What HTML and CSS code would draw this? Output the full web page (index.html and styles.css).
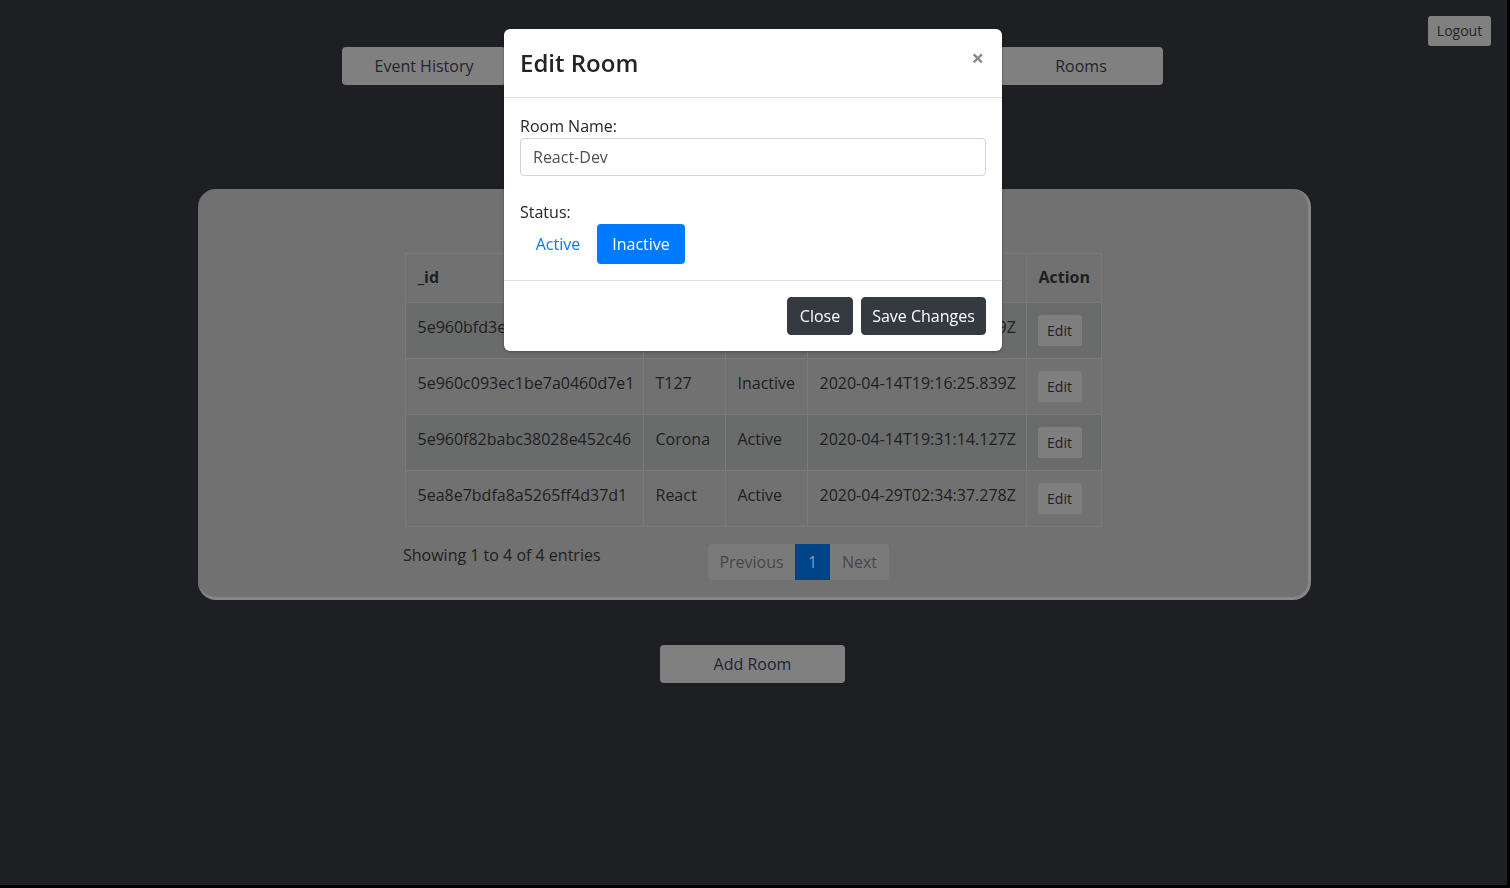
FILE: index.html
```html
<!DOCTYPE html>
<html lang="en">
<head>
<meta charset="utf-8">
<title>Rooms</title>
<link rel="stylesheet" href="styles.css">
</head>
<body>
<div class="page">
  <header class="topbar">
    <button class="btn-gray logout">Logout</button>
  </header>
  <nav class="nav">
    <button class="btn-gray nav-btn">Event History</button>
    <button class="btn-gray nav-btn">Users</button>
    <button class="btn-gray nav-btn">Devices</button>
    <button class="btn-gray nav-btn">Rooms</button>
  </nav>
  <main class="card">
    <table class="dt">
      <colgroup>
        <col class="c-id"><col class="c-name"><col class="c-status"><col class="c-date"><col class="c-action">
      </colgroup>
      <thead>
        <tr><th>_id</th><th>Name</th><th>Status</th><th>Created</th><th>Action</th></tr>
      </thead>
      <tbody>
        <tr class="odd"><td>5e960bfd3ec1be7a0460d7e0</td><td>Dev</td><td>Inactive</td><td>2020-04-14T19:15:09.519Z</td><td class="act"><button class="edit">Edit</button></td></tr>
        <tr><td>5e960c093ec1be7a0460d7e1</td><td>T127</td><td>Inactive</td><td>2020-04-14T19:16:25.839Z</td><td class="act"><button class="edit">Edit</button></td></tr>
        <tr class="odd"><td>5e960f82babc38028e452c46</td><td>Corona</td><td>Active</td><td>2020-04-14T19:31:14.127Z</td><td class="act"><button class="edit">Edit</button></td></tr>
        <tr><td>5ea8e7bdfa8a5265ff4d37d1</td><td>React</td><td>Active</td><td>2020-04-29T02:34:37.278Z</td><td class="act"><button class="edit">Edit</button></td></tr>
      </tbody>
    </table>
    <div class="dt-foot">
      <div class="info">Showing 1 to 4 of 4 entries</div>
      <ul class="pager">
        <li class="pg first">Previous</li>
        <li class="pg current">1</li>
        <li class="pg last">Next</li>
      </ul>
    </div>
  </main>
  <div class="add-wrap">
    <button class="btn-gray add-btn">Add Room</button>
  </div>
</div>

<div class="modal-layer">
  <div class="modal">
    <div class="modal-header">
      <h4 class="modal-title">Edit Room</h4>
      <span class="close">×</span>
    </div>
    <div class="modal-body">
      <div class="form-group">
        <label class="lbl">Room Name:</label>
        <div class="input">React-Dev</div>
      </div>
      <div class="form-group last">
        <label class="lbl">Status:</label>
        <div class="toggle">
          <button class="tg tg-link">Active</button>
          <button class="tg tg-primary">Inactive</button>
        </div>
      </div>
    </div>
    <div class="modal-footer">
      <button class="btn-dark btn-close">Close</button>
      <button class="btn-dark btn-save">Save Changes</button>
    </div>
  </div>
</div>
</body>
</html>
```

FILE: styles.css
```css
* { box-sizing: border-box; }

html, body {
  margin: 0;
  padding: 0;
}

body {
  background: #000;
  font-family: "Open Sans", "Noto Sans", sans-serif;
  font-size: 16px;
  line-height: 24px;
  color: #212529;
}

.page {
  width: 1507px;
  height: 885px;
  background: #1e1f23;
  overflow: hidden;
}

button {
  font-family: inherit;
}

.btn-gray {
  background: #808080;
  color: #1e2530;
  border: none;
  border-radius: 4px;
  font-size: 16px;
  line-height: 24px;
  padding: 7px 12px;
}

.topbar {
  display: flex;
  justify-content: flex-end;
  padding: 16px 16px 0 0;
}

.logout {
  font-size: 14px;
  line-height: 21px;
  padding: 3px 8px 5px;
  width: 63px;
  height: 30px;
  border-radius: 3px;
}

.nav {
  display: flex;
  justify-content: center;
  gap: 55px;
  margin-top: 1px;
  padding-right: 2px;
}

.nav-btn {
  width: 164px;
  height: 38px;
}

.card {
  width: 1113px;
  margin: 104px 0 0 198px;
  background: #717171;
  border-right: 3px solid #868686;
  border-bottom: 3px solid #868686;
  border-radius: 18px;
  padding: 64px 0 17px;
}

.dt {
  width: 696px;
  margin: 0 auto;
  table-layout: fixed;
  border-collapse: collapse;
  color: #1d1f22;
}

.c-id { width: 238px; }
.c-name { width: 82px; }
.c-status { width: 82px; }
.c-date { width: 219px; }
.c-action { width: 75px; }

.dt th, .dt td {
  border: 1px solid #7a7a7a;
  text-align: left;
  white-space: nowrap;
  overflow: hidden;
  vertical-align: middle;
}

.dt th {
  font-weight: 700;
  padding: 11px 12px 13px;
}

.dt td {
  height: 56px;
  padding: 8px 12px 16px;
}

.dt td.act {
  padding: 12px 12px 12px 11px;
}

.dt tr.odd td {
  background: #6a6b6b;
}

.edit {
  background: #7e7e7e;
  color: #1d1f22;
  border: 1px solid #7e7e7e;
  border-radius: 3px;
  font-size: 14px;
  line-height: 21px;
  padding: 4px 0;
  width: 44px;
  height: 31px;
}

.dt-foot {
  width: 700px;
  margin: 16px auto 0;
  display: grid;
  grid-template-columns: 305px auto;
  align-items: start;
}

.info {
  color: #1d1f22;
  line-height: 24px;
}

.pager {
  list-style: none;
  margin: 1px 0 0;
  padding: 0;
  display: flex;
}

.pg {
  background: #7a7a7a;
  color: #43474c;
  height: 36px;
  line-height: 24px;
  padding: 6px 0;
  text-align: center;
}

.pg.first { border-radius: 4px 0 0 4px; width: 87px; }
.pg.current { background: #004387; color: #7f9dbf; width: 35px; }
.pg.last { border-radius: 0 4px 4px 0; width: 59px; }

.add-wrap {
  display: flex;
  justify-content: center;
  margin-top: 45px;
  padding-right: 2px;
}

.add-btn {
  width: 185px;
  height: 38px;
}

/* Modal */
.modal-layer {
  position: fixed;
  top: 0;
  left: 0;
  width: 1506px;
  height: 885px;
  display: flex;
  justify-content: center;
  align-items: flex-start;
  padding-top: 29px;
}

.modal {
  width: 498px;
  background: #fff;
  border-radius: 6px;
  box-shadow: 0 1px 3px rgba(0, 0, 0, 0.35);
}

.modal-header {
  display: flex;
  align-items: flex-start;
  justify-content: space-between;
  padding: 16px;
  border-bottom: 1px solid #dee2e6;
}

.modal-title {
  margin: 0;
  font-size: 24px;
  line-height: 36px;
  font-weight: 600;
  color: #212529;
}

.close {
  font-size: 22px;
  font-weight: 700;
  line-height: 24px;
  color: #878787;
  padding-right: 2px;
}

.modal-body {
  padding: 16px;
}

.form-group {
  margin-bottom: 24px;
}

.form-group.last {
  margin-bottom: 0;
}

.lbl {
  display: block;
  line-height: 24px;
  color: #212529;
}

.input {
  height: 38px;
  border: 1px solid #ced4da;
  border-radius: 4px;
  padding: 6px 12px;
  color: #495057;
  line-height: 24px;
}

.toggle {
  display: flex;
  gap: 1px;
}

.tg {
  border: none;
  border-radius: 4px;
  font-size: 16px;
  line-height: 24px;
  padding: 8px 0;
  height: 40px;
  text-align: center;
}

.tg-link {
  background: transparent;
  color: #007bff;
  width: 76px;
}

.tg-primary {
  background: #007bff;
  color: #fff;
  width: 88px;
}

.modal-footer {
  display: flex;
  justify-content: flex-end;
  gap: 8px;
  padding: 16px;
  border-top: 1px solid #dee2e6;
}

.btn-dark {
  background: #343a40;
  color: #fff;
  border: 1px solid #343a40;
  border-radius: 4px;
  font-size: 16px;
  line-height: 24px;
  padding: 6px 0;
  height: 38px;
  text-align: center;
}

.btn-close { width: 66px; }
.btn-save { width: 125px; }
```
